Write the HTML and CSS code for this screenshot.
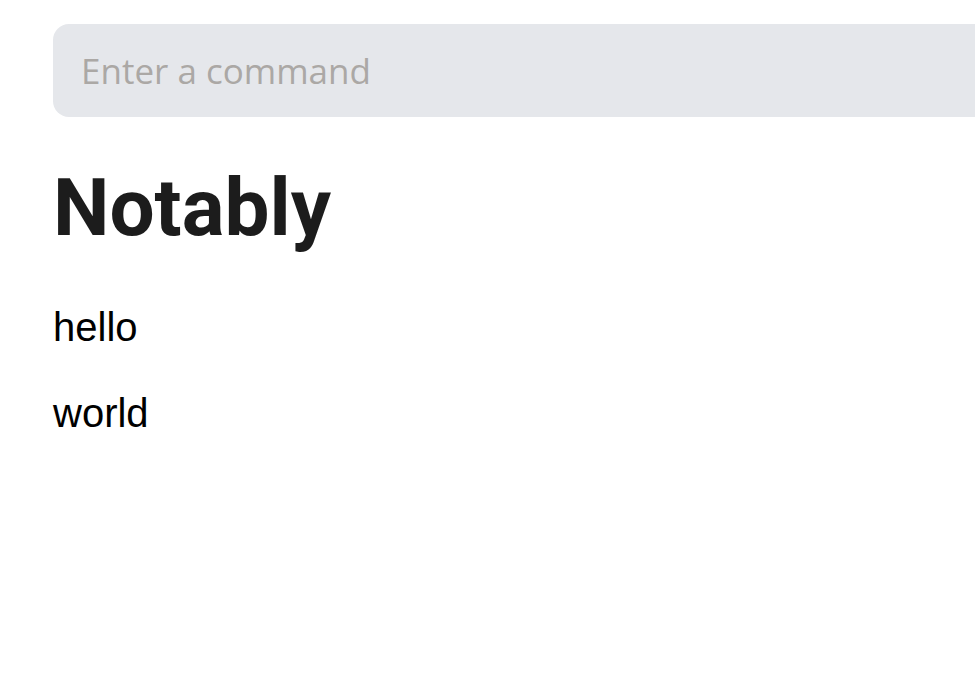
FILE: index.html
```html
<!DOCTYPE html>
<html>
<head>
<meta charset="utf-8">
<link rel="stylesheet" href="styles.css">
</head>
<body>
<main class="app">
  <input class="command" type="text" placeholder="Enter a command">
  <h1 class="title">Notably</h1>
  <ul class="notes">
    <li class="note">hello</li>
    <li class="note">world</li>
  </ul>
</main>
</body>
</html>
```
FILE: styles.css
```css
html, body {
  margin: 0;
  padding: 0;
  overflow: hidden;
  background: #ffffff;
}
.app {
  padding: 24px 0 0 53px;
  display: flex;
  flex-direction: column;
  align-items: flex-start;
  overflow: hidden;
}
.command {
  box-sizing: border-box;
  width: calc(100% + 60px);
  height: 93px;
  border: none;
  outline: none;
  border-radius: 16px;
  background: #e5e7eb;
  padding: 0 28px;
  font-family: "Open Sans", sans-serif;
  font-size: 35px;
  color: #333;
}
.command::placeholder {
  color: #aba8a5;
}
.title {
  margin: 44px 0 0 0;
  font-family: Roboto, sans-serif;
  font-weight: 700;
  font-size: 80px;
  line-height: normal;
  color: #1c1c1c;
}
.notes {
  list-style: none;
  margin: 50px 0 0 0;
  padding: 0;
  display: flex;
  flex-direction: column;
  gap: 41px;
}
.note {
  font-family: "Liberation Sans", Arial, sans-serif;
  font-size: 40px;
  line-height: normal;
  color: #000;
}
```
